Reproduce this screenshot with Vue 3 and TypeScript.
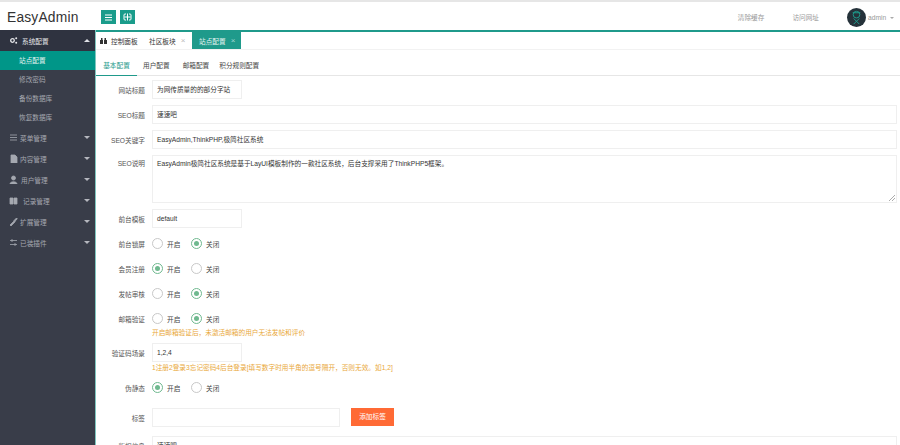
<script setup lang="ts">
interface NavItem { label: string; icon: string; gap: number }
const navGroups: NavItem[] = [
  { label: '菜单管理', icon: 'M1 2h7M1 4.500h7M1 7h7', gap: 2 },
  { label: '内容管理', icon: 'M2 1h4l2 2v6H2z', gap: 2 },
  { label: '用户管理', icon: 'M4.500 1a2 2 0 1 1 0 4 2 2 0 0 1 0-4zM1 9c0-3 7-3 7 0z', gap: 3 },
  { label: '记录管理', icon: 'M1 2h3v6H1zM5 2h3v6H5z', gap: 5 },
  { label: '扩展管理', icon: 'M7.500 1 5 3.500l.7.8L8.300 2zM5.300 3.800 1 8l1 1 4.200-4.300z', gap: 2 },
  { label: '已装插件', icon: 'M1 2.500h7M1 6.500h7M3 1v3M6 5v3', gap: 2 }
]
const subItems = ['修改密码', '备份数据库', '恢复数据库']
const subTabs = ['基本配置', '用户配置', '邮箱配置', '积分规则配置']
const radios = [
  { label: '前台锁屏', on: false },
  { label: '会员注册', on: true },
  { label: '发帖审核', on: false },
  { label: '邮箱验证', on: false }
]
</script>

<template>
  <div class="page">
    <header class="top">
      <div class="logo">EasyAdmin</div>
      <div class="tools">
        <span class="tool">
          <svg width="7" height="7" viewBox="0 0 7 7"><path d="M0 1h7M0 3.500h7M0 6h7" stroke="#fff" stroke-width="1" /></svg>
        </span>
        <span class="tool">
          <svg width="9" height="8" viewBox="0 0 9 8"><path d="M3 1H2Q1 1 1 2v4q0 1 1 1h1M6 1h1q1 0 1 1v4q0 1-1 1H6M1.500 4h6M4.500 .5v7" stroke="#fff" fill="none" stroke-width="1" /></svg>
        </span>
      </div>
      <div class="links">
        <span>清除缓存</span>
        <span>访问网址</span>
        <div class="user">
          <svg class="avatar" viewBox="0 0 20 20">
            <circle cx="10" cy="10" r="10" fill="#25323a" />
            <circle cx="10" cy="7" r="3.500" fill="none" stroke="#1c9c8c" stroke-width="1" />
            <path d="M6 5h8M7 11l6 6M13 11l-6 6" stroke="#1c9c8c" fill="none" stroke-width="1" />
          </svg>
          <span class="uname">admin</span>
          <i class="caret-s"></i>
        </div>
      </div>
    </header>
    <div class="body">
      <aside class="side">
        <div class="group open">
          <svg width="9" height="9" viewBox="0 0 9 9"><circle cx="3.500" cy="4.500" r="1.800" fill="none" stroke="#e6e7ea" stroke-width="1.300" /><circle cx="7.200" cy="2.200" r="1" fill="#e6e7ea" /><circle cx="7.200" cy="6.800" r="1" fill="#e6e7ea" /></svg>
          <span class="gl">系统配置</span>
          <i class="caret up"></i>
        </div>
        <div class="sub active">站点配置</div>
        <div v-for="s in subItems" :key="s" class="sub">{{ s }}</div>
        <div v-for="g in navGroups" :key="g.label" class="group">
          <svg width="9" height="9" viewBox="0 0 9 9"><path :d="g.icon" fill="#a5a8b0" stroke="#a5a8b0" stroke-width="0.800" /></svg>
          <span :style="{ marginLeft: g.gap + 'px' }">{{ g.label }}</span>
          <i class="caret"></i>
        </div>
      </aside>
      <main class="main">
        <nav class="tabs">
          <span class="tab t1">
            <svg width="7" height="6" viewBox="0 0 7 6"><path d="M0 2h3v4H0zM4 2h3v4H4zM1 0h1.500v2H1zM4.500 0H6v2H4.500z" fill="#333" /></svg>
            <span>控制面板</span>
          </span>
          <span class="tab t2">社区板块<b>×</b></span>
          <span class="tab t3">站点配置<b>×</b></span>
        </nav>
        <nav class="subtabs">
          <span v-for="(t, i) in subTabs" :key="t" :class="['subtab', { on: i === 0 }]">{{ t }}</span>
        </nav>
        <form class="form">
          <div class="row">
            <label>网站标题</label>
            <div class="field short">为网传质量的的部分字站</div>
          </div>
          <div class="row">
            <label>SEO标题</label>
            <div class="field wide">速速吧</div>
          </div>
          <div class="row">
            <label>SEO关键字</label>
            <div class="field wide">EasyAdmin,ThinkPHP,极简社区系统</div>
          </div>
          <div class="row">
            <label>SEO说明</label>
            <div class="field wide area">
              EasyAdmin极简社区系统是基于LayUI模板制作的一款社区系统，后台支撑采用了ThinkPHP5框架。
              <svg class="grip" width="6" height="6" viewBox="0 0 6 6"><path d="M6 0 0 6M6 3 3 6" stroke="#888" stroke-width="0.700" /></svg>
            </div>
          </div>
          <div class="row">
            <label>前台模板</label>
            <div class="field short">default</div>
          </div>
          <template v-for="r in radios" :key="r.label">
            <div class="row radio-row">
              <label>{{ r.label }}</label>
              <span :class="['radio', { on: r.on }]"></span><span class="rlabel">开启</span>
              <span :class="['radio', { on: !r.on }]"></span><span class="rlabel">关闭</span>
            </div>
          </template>
          <div class="hint first-hint">开启邮箱验证后，未激活邮箱的用户无法发帖和评价</div>
          <div class="row code-row">
            <label>验证码场景</label>
            <div class="field short">1,2,4</div>
          </div>
          <div class="hint second-hint">1注册2登录3忘记密码4后台登录[填写数字时用半角的逗号隔开，否则无效。如1,2]</div>
          <div class="row radio-row static-row">
            <label>伪静态</label>
            <span class="radio on"></span><span class="rlabel">开启</span>
            <span class="radio"></span><span class="rlabel">关闭</span>
          </div>
          <div class="row tag-row">
            <label>标签</label>
            <div class="field tag"></div>
            <span class="btn">添加标签</span>
          </div>
          <div class="row copy-row">
            <label>版权信息</label>
            <div class="field wide">速速吧</div>
          </div>
        </form>
      </main>
    </div>
  </div>
</template>

<style>
html, body { margin: 0; height: 100%; overflow: hidden; background: #fff; }
</style>

<style scoped>
.page {
  width: 900px;
  height: 445px;
  overflow: hidden;
  display: flex;
  flex-direction: column;
  font-family: "Liberation Sans", "Noto Sans CJK SC", sans-serif;
  font-size: 6.670px;
  color: #444;
  border-top: 2px solid #e6e6e6;
  box-sizing: border-box;
}
.top {
  height: 28px;
  flex: none;
  display: flex;
  align-items: center;
  padding-top: 2px;
  box-sizing: border-box;
}
.logo { width: 101px; padding-left: 7px; box-sizing: border-box; font-size: 13.800px; letter-spacing: 0.200px; color: #333; }
.tools { display: flex; gap: 4px; }
.tool {
  width: 15px;
  height: 14px;
  background: #1a9c8b;
  display: flex;
  align-items: center;
  justify-content: center;
}
.links { margin-left: auto; display: flex; align-items: center; color: #999; }
.links > span:first-child { margin-right: 28px; }
.user { display: flex; align-items: center; margin-left: 28px; width: 53px; }
.avatar { width: 19px; height: 19px; }
.uname { margin-left: 2px; }
.caret-s { margin-left: 4px; margin-top: 2px; border: 2px solid transparent; border-top-color: #aaa; border-bottom: 0; }
.body { flex: 1; display: flex; min-height: 0; border-top: 2px solid #1f9a8b; }
.side {
  width: 95px;
  flex: none;
  margin-top: -2px;
  background: #393d49;
  color: #a5a8b0;
  border-right: 1px solid #7fc6bf;
}
.group {
  height: 21px;
  display: flex;
  align-items: center;
  padding-left: 9px;
  position: relative;
}
.group.open { background: #2f3340; color: #e6e7ea; }
.gl { margin-left: 4px; }
.caret {
  position: absolute;
  right: 5px;
  top: 9px;
  border: 3px solid transparent;
  border-top-color: #b6b8bf;
  border-bottom: 0;
}
.caret.up { border-top: 0; border-bottom: 3px solid #dfe1e6; }
.sub { height: 19px; line-height: 19px; padding-left: 19px; }
.sub.active { background: #009688; color: #e6f4f2; }
.main { flex: 1; min-width: 0; }
.tabs { height: 17px; display: flex; align-items: stretch; border-bottom: 1px solid #f2f2f2; }
.tab { display: flex; align-items: center; color: #333; white-space: nowrap; box-sizing: border-box; }
.tab.t1 { width: 51px; padding-left: 4px; gap: 4px; }
.tab.t2 { width: 45px; padding-left: 2px; }
.tab.t3 { width: 49px; padding-left: 7px; background: #1f9a8b; color: #e6f4f2; }
.tab b { font-weight: 400; color: #bbb; margin-left: 5px; font-size: 8px; }
.tab.t3 b { color: #9fd5cf; }
.subtabs { height: 26px; display: flex; border-bottom: 1px solid #e6e6e6; box-sizing: border-box; }
.subtab {
  line-height: 31px;
  height: 26px;
  box-sizing: border-box;
  color: #444;
}
.subtab:first-child { width: 41px; text-align: center; }
.subtab:nth-child(2) { margin-left: 6px; }
.subtab:nth-child(3) { margin-left: 13px; }
.subtab:nth-child(4) { margin-left: 10px; }
.subtab.on { color: #1f9a8b; border-bottom: 1px solid #1f9a8b; }
.form { padding: 4px 0 0; }
.row { display: flex; align-items: center; margin-bottom: 6px; }
.row label { width: 49px; margin-right: 7px; text-align: right; flex: none; color: #555; }
.field {
  height: 19px;
  line-height: 17px;
  box-sizing: border-box;
  border: 1px solid #efefef;
  padding: 0 4px;
  color: #333;
  background: #fff;
  white-space: nowrap;
  overflow: hidden;
}
.short { width: 90px; }
.wide { width: 745px; }
.area { height: 48px; position: relative; line-height: 15px; }
.row:has(.area) { align-items: flex-start; }
.row:has(.area) label { margin-top: 3px; }
.grip { position: absolute; right: 1px; bottom: 1px; }
.radio-row { height: 19px; }
.radio {
  width: 11px;
  height: 11px;
  border: 1px solid #c8c8c8;
  border-radius: 50%;
  box-sizing: border-box;
  display: inline-block;
  flex: none;
  position: relative;
}
.radio.on { border-color: #6fb98f; }
.radio.on::after {
  content: "";
  position: absolute;
  inset: 2px;
  border-radius: 50%;
  background: #6fb98f;
}
.rlabel { margin-left: 4px; width: 24px; color: #444; }
.hint { margin-left: 56px; color: #e9a83a; height: 11px; line-height: 11px; white-space: nowrap; }
.first-hint { margin-top: -7px; margin-bottom: 5px; }
.second-hint { margin-top: -6px; margin-bottom: 5px; }
.static-row { margin-bottom: 11px; }
.tag { width: 188px; }
.btn {
  margin-left: 11px;
  width: 43px;
  height: 18px;
  background: #ff6a35;
  color: #fff;
  text-align: center;
  line-height: 18px;
  align-self: flex-start;
}
.tag-row { margin-bottom: 9px; }
</style>
